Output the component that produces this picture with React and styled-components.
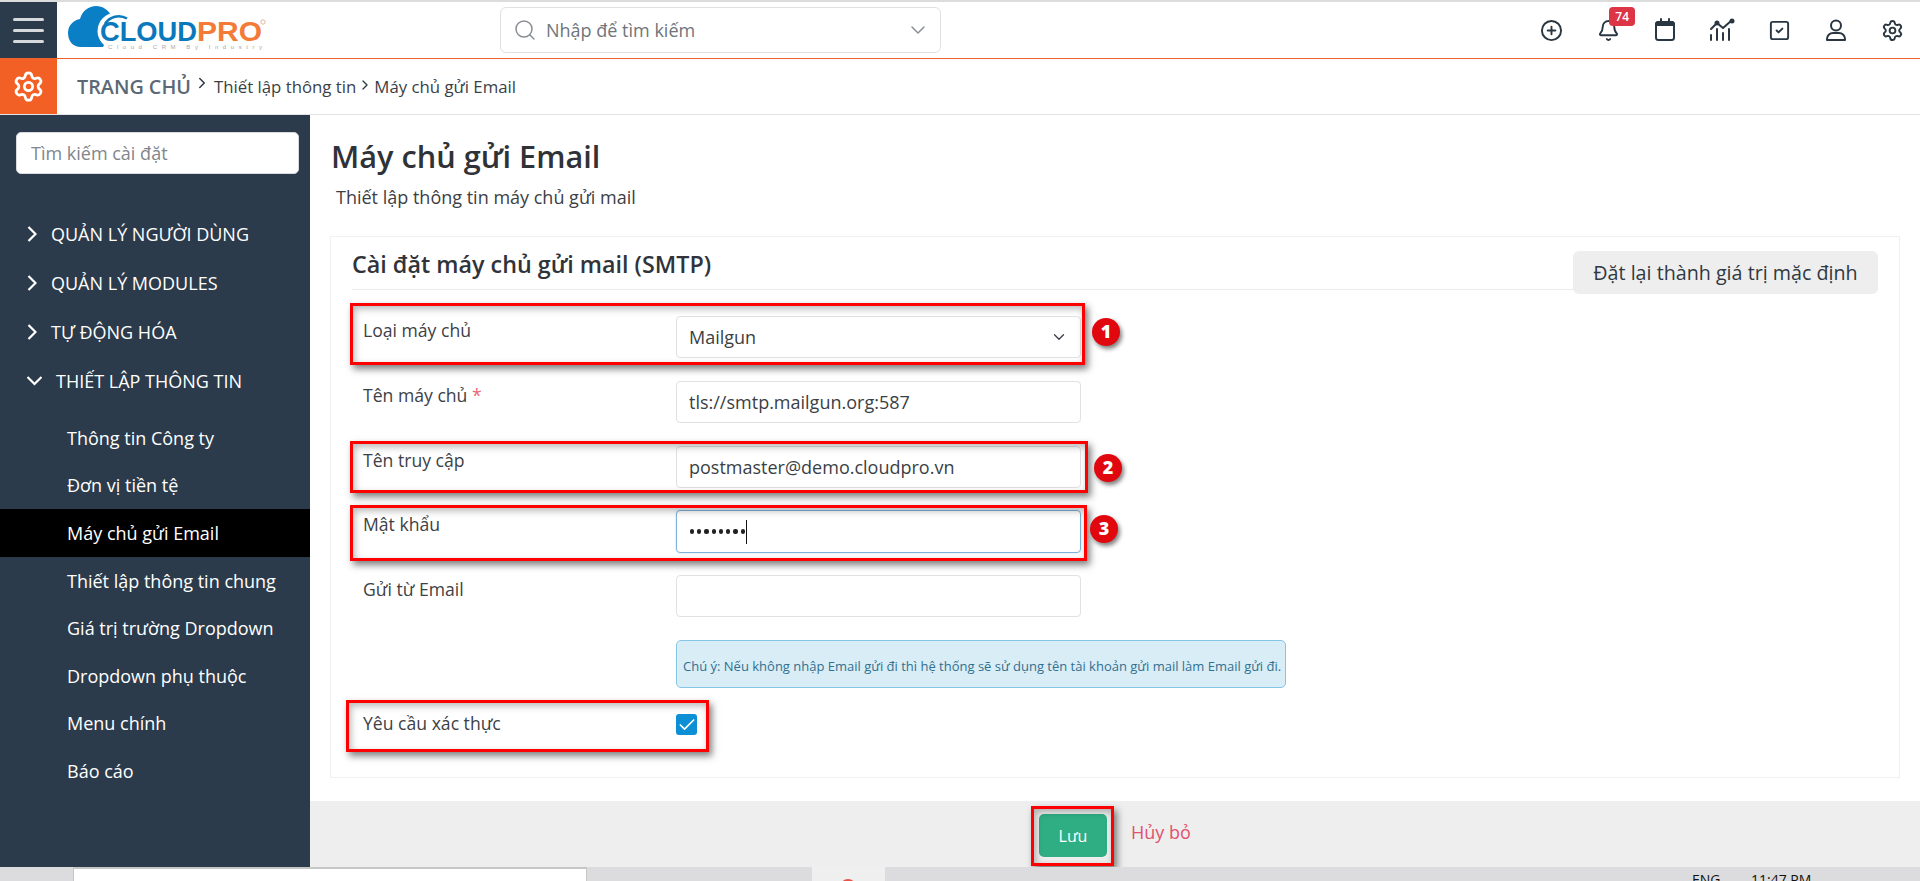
import React from "react";
import styled, { createGlobalStyle } from "styled-components";
import { ChevronRight, ChevronDown, Search, CirclePlus, Bell, SquareCheck, Settings, Check } from "lucide-react";

const Global = createGlobalStyle`
  html, body { margin: 0; padding: 0; background: #fff; }
  body { font-family: "Open Sans", "Noto Sans", sans-serif; color: #333; overflow: hidden; }
  * { box-sizing: border-box; }
`;

const Page = styled.div`
  width: 1920px; height: 881px; display: flex; flex-direction: column; overflow: hidden; border-top: 2px solid #dcdcdc; position: relative;
`;
const TopBar = styled.header`
  height: 57px; flex: none; display: flex; align-items: center; border-bottom: 1px solid #f0622a;
`;
const Burger = styled.div`
  width: 57px; height: 100%; background: #2c3b4b; display: flex; flex-direction: column; justify-content: center; gap: 8px; padding: 0 13px;
`;
const BurgerBar = styled.span`
  height: 3px; border-radius: 2px; background: #d7dadd;
`;
const LogoBox = styled.div`
  width: 210px; margin-left: 10px; height: 100%; flex: none;
`;
const SearchBox = styled.div`
  margin-left: 223px; width: 441px; height: 46px; border: 1px solid #dfe1e4; border-radius: 6px; display: flex; align-items: center; padding: 0 10px 0 12px; color: #8a8f95; font-size: 18px;
`;
const SearchText = styled.span`
  flex: 1; margin-left: 9px; color: #6f757b;
`;
const IconRow = styled.div`
  margin-left: auto; margin-right: -1px; display: flex; align-items: center; height: 100%;
`;
const IconCell = styled.div`
  width: 56.8px; height: 100%; display: flex; align-items: center; justify-content: center; position: relative; color: #2a3642;
`;
const Badge = styled.span`
  position: absolute; left: 29px; top: 5px; width: 26px; height: 19px; background: #dc3545; color: #fff; border-radius: 4px; font-size: 12px; font-weight: 600; line-height: 19px; text-align: center;
`;
const Crumbs = styled.div`
  height: 56px; flex: none; display: flex; align-items: center; border-bottom: 1px solid #e3e3e3;
`;
const GearBox = styled.div`
  width: 57px; height: 100%; background: #f26026; color: #fff; display: flex; align-items: center; justify-content: center;
`;
const CrumbHome = styled.span`
  margin-left: 20px; font-size: 19.8px; font-weight: 600; color: #5b6875;
`;
const CrumbLink = styled.span`
  font-size: 16.8px; color: #3a3f45;
`;
const CrumbSep = styled(ChevronRight)`
  margin: ${p => p.$home ? "-8px 3px 0 2px" : "-3px 1px 0 1px"}; color: #2d3a47; flex: none;
`;
const Body = styled.div`
  flex: 1; display: flex; min-height: 0;
`;
const Side = styled.aside`
  width: 310px; flex: none; background: #2c3b4b; color: #fff; padding-top: 17px;
`;
const SideSearch = styled.input`
  display: block; margin-left: 16px; width: 283px; height: 42px; border: 1px solid #d8dadd; border-radius: 5px; padding: 0 14px; font: 18px "Open Sans", sans-serif; background: #fff;
  &::placeholder { color: #80868c; opacity: 1; }
`;
const Groups = styled.nav`
  margin-top: 35px;
`;
const Group = styled.div`
  height: 49px; display: flex; align-items: center; gap: 14px; padding-left: 27px; font-size: 18px; color: #fff; text-transform: uppercase;
`;
const SubList = styled.div`
  padding-top: 9px;
`;
const SubItem = styled.div`
  height: 47.6px; display: flex; align-items: center; padding-left: 67px; font-size: 18px; color: #fff; background: ${p => p.$active ? "#000" : "transparent"};
`;
const Main = styled.main`
  flex: 1; min-width: 0; display: flex; flex-direction: column; background: #fff;
`;
const Content = styled.div`
  flex: 1; padding: 0 20px; min-height: 0;
`;
const Title = styled.h1`
  margin: 20px 0 0 1px; font-size: 30.7px; font-weight: 600; line-height: 42px; color: #2f3338;
`;
const Sub = styled.p`
  margin: 9px 0 0 6px; font-size: 18px; line-height: 22px; color: #3c4044;
`;
const Card = styled.section`
  margin-top: 28px; height: 542px; border: 1px solid #f1f1f1; padding: 0 21px; position: relative;
`;
const CardHead = styled.div`
  height: 53px; border-bottom: 1px solid #ececec; display: flex; align-items: flex-end; padding-bottom: 11px; margin-bottom: 26px;
`;
const CardTitle = styled.h2`
  margin: 0; font-size: 23.3px; font-weight: 600; line-height: 28px; color: #30343a;
`;
const ResetBtn = styled.button`
  position: absolute; right: 21px; top: 14px; width: 305px; height: 43px; border: 0; border-radius: 6px; background: #eee; font: 19.7px "Open Sans", sans-serif; color: #2f3942;
`;
const Row = styled.div`
  display: grid; grid-template-columns: 313px 405px; padding-left: 11px; margin-bottom: ${p => p.$gap || 23}px; position: relative;
`;
const Label = styled.label`
  font-size: 17.6px; line-height: 22px; padding-top: ${p => p.$flush ? 0 : 3}px; color: #3d4146;
`;
const Req = styled.span`
  color: #e8677c;
`;
const Input = styled.input`
  width: 405px; height: 42px; border: 1px solid #dfe1e4; border-radius: 4px; padding: 0 12px; font: 18px "Open Sans", sans-serif; color: #3a3f45; background: #fff; outline: 0;
`;
const SelectBox = styled.div`
  width: 405px; height: 42px; border: 1px solid #dfe1e4; border-radius: 4px; padding: 0 12px; font-size: 18px; color: #3a3f45; display: flex; align-items: center; justify-content: space-between;
`;
const PassBox = styled.div`
  width: 405px; height: 43px; border: 1px solid #7fb2d8; border-radius: 4px; padding: 0 13px; font-size: 16px; color: #222; display: flex; align-items: center; box-shadow: 0 0 2px rgba(127,178,216,.5);
`;
const Dot = styled.span`
  width: 4.2px; height: 4.2px; margin-right: 3.05px; border-radius: 50%; background: #222; flex: none;
`;
const Caret = styled.span`
  width: 1px; height: 24px; background: #111; margin-left: -2px;
`;
const Note = styled.div`
  grid-column: 2; width: 610px; height: 48px; background: #d9edf7; border: 1px solid #85c5e5; border-radius: 5px; font-size: 13px; color: #31708f; display: flex; align-items: center; padding: 4px 6px 0; white-space: nowrap;
`;
const CheckBox = styled.span`
  width: 21px; height: 21px; border-radius: 3px; background: #0d8fd6; color: #fff; display: flex; align-items: center; justify-content: center; margin-top: 2px;
`;
const Mark = styled.div`
  position: absolute; border: 3px solid #f00; box-shadow: 3px 4px 7px rgba(0,0,0,.5), inset 2px 3px 7px rgba(0,0,0,.28); pointer-events: none;
  left: ${p => p.$l}px; top: ${p => p.$t}px; width: ${p => p.$w}px; height: ${p => p.$h}px;
`;
const Num = styled.span`
  position: absolute; width: 28px; height: 28px; border-radius: 50%; background: #e0080e; color: #fff; font-size: 18px; font-weight: 800; line-height: 27px; text-align: center; box-shadow: 2px 3px 4px rgba(0,0,0,.5);
  left: ${p => p.$l}px; top: ${p => p.$t}px;
`;
const Footer = styled.footer`
  height: 66px; flex: none; background: #eee; display: flex; align-items: flex-start; position: relative; padding: 13px 0 0 729px;
`;
const Save = styled.button`
  width: 68px; height: 43px; border: 0; border-radius: 5px; background: #2fae83; color: #fff; font: 500 16px "Open Sans", sans-serif;
`;
const Cancel = styled.span`
  margin: 6px 0 0 24px; font-size: 18px; line-height: 24px; color: #e2516e;
`;
const Task = styled.div`
  height: 14px; flex: none; background: #dcdcde; position: relative; display: flex; overflow: hidden;
`;
const TaskInput = styled.div`
  margin-left: 73px; width: 514px; height: 14px; background: #fff; border-top: 2px solid #c6c6c6; border-left: 1px solid #c6c6c6; border-right: 1px solid #c6c6c6;
`;
const TaskApp = styled.div`
  margin-left: 225px; width: 73px; height: 14px; background: #efefef; position: relative;
`;
const TaskDot = styled.span`
  position: absolute; left: 28px; top: 12px; width: 16px; height: 16px; border-radius: 50%; background: #e8544a;
`;
const TaskText = styled.span`
  position: absolute; top: 3px; font: 14px "Open Sans", sans-serif; color: #111; line-height: 20px; left: ${p => p.$l}px;
`;

const Logo = () => (
  <svg width="210" height="57" viewBox="0 0 210 57">
    <path d="M14 45C5 45 1 38 1 31c0-8 6-13 12-14C15 9 22 4 29 4c7 0 12 4 15 9l6 6-14 26z" fill="#0a7fc6" />
    <circle cx="49" cy="29" r="18.500" fill="#fff" />
    <path d="M60 16.500A16 16 0 0 0 38 22" fill="none" stroke="#0a78bd" strokeWidth="2.500" />
    <text x="33" y="39" fontFamily="'Liberation Sans', sans-serif" fontSize="27" fontWeight="700" fill="#0a78bd" textLength="97" lengthAdjust="spacingAndGlyphs">CLOUD</text>
    <text x="130" y="39" fontFamily="'Liberation Sans', sans-serif" fontSize="27" fontWeight="700" fill="#f47a38" textLength="65" lengthAdjust="spacingAndGlyphs">PRO</text>
    <text x="41" y="47" fontFamily="'Liberation Sans', sans-serif" fontSize="6" fill="#a9a9a9" textLength="154">Cloud CRM By Industry</text>
    <circle cx="196" cy="20" r="2.200" fill="none" stroke="#d89a77" strokeWidth=".7" />
  </svg>
);

const CalendarIcon = () => (
  <svg width="22" height="24" viewBox="0 0 22 24" fill="none" stroke="currentColor" strokeWidth="2">
    <rect x="2" y="4" width="18" height="18" rx="2.5" />
    <path d="M2 7h18V6.500A2.500 2.500 0 0 0 17.500 4h-13A2.500 2.500 0 0 0 2 6.500z" fill="currentColor" />
    <path d="M7 1v4M15 1v4" strokeLinecap="round" />
  </svg>
);

const ChartIcon = () => (
  <svg width="26" height="24" viewBox="0 0 26 24" fill="none" stroke="currentColor" strokeWidth="2" strokeLinecap="round" strokeLinejoin="round">
    <path d="M2 11l6-6 6 5 8-7" />
    <path d="M2 17v5M8 11v11M14 15v7M20 11v11" />
    <circle cx="8" cy="5" r="1.500" fill="currentColor" />
    <circle cx="23" cy="3" r="1.500" fill="currentColor" />
  </svg>
);

const UserIcon = () => (
  <svg width="24" height="24" viewBox="0 0 24 24" fill="none" stroke="currentColor" strokeWidth="2" strokeLinejoin="round">
    <circle cx="12" cy="7.500" r="5" />
    <path d="M3 22v-1a6 6 0 0 1 6-6h6a6 6 0 0 1 6 6v1z" />
  </svg>
);

const GroupArrow = ({ open }) => open ? (
  <svg width="15" height="10" viewBox="0 0 15 10" fill="none" stroke="currentColor" strokeWidth="2.200"><path d="M.5 1l7 7 7-7" /></svg>
) : (
  <svg width="10" height="16" viewBox="0 0 10 16" fill="none" stroke="currentColor" strokeWidth="2.200"><path d="M1.500 1l7 7-7 7" /></svg>
);

const menu = ["Thông tin Công ty", "Đơn vị tiền tệ", "Máy chủ gửi Email", "Thiết lập thông tin chung", "Giá trị trường Dropdown", "Dropdown phụ thuộc", "Menu chính", "Báo cáo"];

export default function App() {
  return (
    <>
      <Global />
      <Page>
        <TopBar>
          <Burger><BurgerBar /><BurgerBar /><BurgerBar /></Burger>
          <LogoBox><Logo /></LogoBox>
          <SearchBox>
            <Search size={24} strokeWidth={1.5} />
            <SearchText>Nhập để tìm kiếm</SearchText>
            <ChevronDown size={24} strokeWidth={1.5} />
          </SearchBox>
          <IconRow>
            <IconCell><CirclePlus size={23} strokeWidth={2} /></IconCell>
            <IconCell><Bell size={23} strokeWidth={2} /><Badge>74</Badge></IconCell>
            <IconCell><CalendarIcon /></IconCell>
            <IconCell><ChartIcon /></IconCell>
            <IconCell><SquareCheck size={23} strokeWidth={2} /></IconCell>
            <IconCell><UserIcon /></IconCell>
            <IconCell><Settings size={23} strokeWidth={2} /></IconCell>
          </IconRow>
        </TopBar>
        <Crumbs>
          <GearBox><Settings size={33} strokeWidth={2} /></GearBox>
          <CrumbHome>TRANG CHỦ</CrumbHome>
          <CrumbSep $home size={18} />
          <CrumbLink>Thiết lập thông tin</CrumbLink>
          <CrumbSep size={16} />
          <CrumbLink>Máy chủ gửi Email</CrumbLink>
        </Crumbs>
        <Body>
          <Side>
            <SideSearch placeholder="Tìm kiếm cài đặt" readOnly />
            <Groups>
              <Group><GroupArrow /><span>Quản lý người dùng</span></Group>
              <Group><GroupArrow /><span>Quản lý Modules</span></Group>
              <Group><GroupArrow /><span>Tự động hóa</span></Group>
              <Group><GroupArrow open /><span>Thiết lập thông tin</span></Group>
            </Groups>
            <SubList>
              {menu.map(m => <SubItem key={m} $active={m === "Máy chủ gửi Email"}>{m}</SubItem>)}
            </SubList>
          </Side>
          <Main>
            <Content>
              <Title>Máy chủ gửi Email</Title>
              <Sub>Thiết lập thông tin máy chủ gửi mail</Sub>
              <Card>
                <CardHead><CardTitle>Cài đặt máy chủ gửi mail (SMTP)</CardTitle></CardHead>
                <ResetBtn>Đặt lại thành giá trị mặc định</ResetBtn>
                <Row>
                  <Label>Loại máy chủ</Label>
                  <SelectBox>Mailgun<ChevronDown size={18} strokeWidth={1.75} /></SelectBox>
                  <Mark $l={-2} $t={-13} $w={735} $h={62} />
                  <Num $l={740} $t={2}>1</Num>
                </Row>
                <Row>
                  <Label>Tên máy chủ <Req>*</Req></Label>
                  <Input readOnly value="tls://smtp.mailgun.org:587" />
                </Row>
                <Row $gap={22}>
                  <Label>Tên truy cập</Label>
                  <Input readOnly value="postmaster@demo.cloudpro.vn" />
                  <Mark $l={-2} $t={-5} $w={738} $h={52} />
                  <Num $l={742} $t={8}>2</Num>
                </Row>
                <Row $gap={22}>
                  <Label>Mật khẩu</Label>
                  <PassBox>{Array.from({ length: 8 }, (_, i) => <Dot key={i} />)}<Caret /></PassBox>
                  <Mark $l={-2} $t={-5} $w={737} $h={56} />
                  <Num $l={738} $t={5}>3</Num>
                </Row>
                <Row>
                  <Label>Gửi từ Email</Label>
                  <Input readOnly value="" />
                </Row>
                <Row $gap={24}>
                  <span />
                  <Note>Chú ý: Nếu không nhập Email gửi đi thì hệ thống sẽ sử dụng tên tài khoản gửi mail làm Email gửi đi.</Note>
                </Row>
                <Row>
                  <Label $flush>Yêu cầu xác thực</Label>
                  <CheckBox><Check size={20} strokeWidth={2} /></CheckBox>
                  <Mark $l={-6} $t={-12} $w={363} $h={52} />
                </Row>
              </Card>
            </Content>
            <Footer>
              <Save>Lưu</Save>
              <Cancel>Hủy bỏ</Cancel>
              <Mark $l={721} $t={5} $w={83} $h={60} />
            </Footer>
          </Main>
        </Body>
        <Task>
          <TaskInput />
          <TaskApp><TaskDot /></TaskApp>
          <TaskText $l={1692}>ENG</TaskText>
          <TaskText $l={1751}>11:47 PM</TaskText>
        </Task>
      </Page>
    </>
  );
}
